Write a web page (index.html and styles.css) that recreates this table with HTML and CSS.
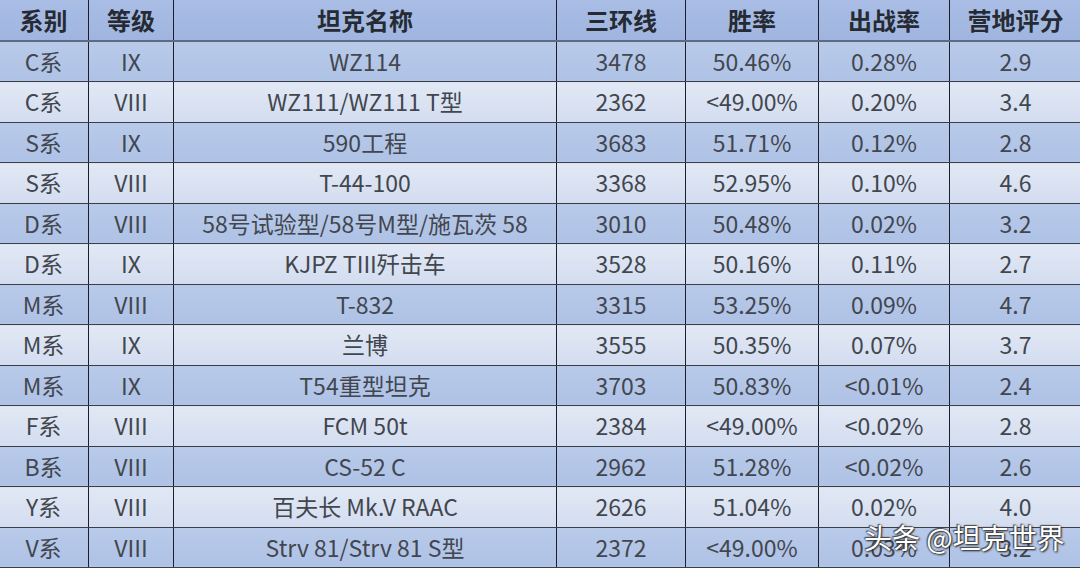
FILE: index.html
```html
<!DOCTYPE html>
<html lang="zh">
<head>
<meta charset="utf-8">
<link rel="stylesheet" href="styles.css">
</head>
<body>
<div class="wrap">
<table class="grid">
<colgroup>
<col class="c1"><col class="c2"><col class="c3"><col class="c4"><col class="c5"><col class="c6"><col class="c7">
</colgroup>
<thead>
<tr class="head"><th>系别</th><th>等级</th><th>坦克名称</th><th>三环线</th><th>胜率</th><th>出战率</th><th>营地评分</th></tr>
</thead>
<tbody>
<tr class="dark"><td>C系</td><td>IX</td><td>WZ114</td><td>3478</td><td>50.46%</td><td>0.28%</td><td>2.9</td></tr>
<tr class="light"><td>C系</td><td>VIII</td><td>WZ111/WZ111 T型</td><td>2362</td><td>&lt;49.00%</td><td>0.20%</td><td>3.4</td></tr>
<tr class="dark"><td>S系</td><td>IX</td><td>590工程</td><td>3683</td><td>51.71%</td><td>0.12%</td><td>2.8</td></tr>
<tr class="light"><td>S系</td><td>VIII</td><td>T-44-100</td><td>3368</td><td>52.95%</td><td>0.10%</td><td>4.6</td></tr>
<tr class="dark"><td>D系</td><td>VIII</td><td>58号试验型/58号M型/施瓦茨 58</td><td>3010</td><td>50.48%</td><td>0.02%</td><td>3.2</td></tr>
<tr class="light"><td>D系</td><td>IX</td><td>KJPZ TIII歼击车</td><td>3528</td><td>50.16%</td><td>0.11%</td><td>2.7</td></tr>
<tr class="dark"><td>M系</td><td>VIII</td><td>T-832</td><td>3315</td><td>53.25%</td><td>0.09%</td><td>4.7</td></tr>
<tr class="light"><td>M系</td><td>IX</td><td>兰博</td><td>3555</td><td>50.35%</td><td>0.07%</td><td>3.7</td></tr>
<tr class="dark"><td>M系</td><td>IX</td><td>T54重型坦克</td><td>3703</td><td>50.83%</td><td>&lt;0.01%</td><td>2.4</td></tr>
<tr class="light"><td>F系</td><td>VIII</td><td>FCM 50t</td><td>2384</td><td>&lt;49.00%</td><td>&lt;0.02%</td><td>2.8</td></tr>
<tr class="dark"><td>B系</td><td>VIII</td><td>CS-52 C</td><td>2962</td><td>51.28%</td><td>&lt;0.02%</td><td>2.6</td></tr>
<tr class="light"><td>Y系</td><td>VIII</td><td>百夫长 Mk.V RAAC</td><td>2626</td><td>51.04%</td><td>0.02%</td><td>4.0</td></tr>
<tr class="dark"><td>V系</td><td>VIII</td><td>Strv 81/Strv 81 S型</td><td>2372</td><td>&lt;49.00%</td><td>0.03%</td><td>3.2</td></tr>
</tbody>
</table>
<div class="mark">头条 @坦克世界</div>
</div>
</body>
</html>
```
FILE: styles.css
```css
* { box-sizing: border-box; }
html, body { margin: 0; padding: 0; }
body {
  width: 1080px;
  height: 568px;
  overflow: hidden;
  background: #dbe3f2;
  font-family: "Noto Sans CJK SC", "Noto Sans", sans-serif;
}
.wrap { position: relative; width: 1080px; height: 568px; }
.grid {
  width: 1083px;
  border-collapse: collapse;
  table-layout: fixed;
  margin-left: -2px;
}
.c1 { width: 90px; }
.c2 { width: 85px; }
.c3 { width: 383px; }
.c4 { width: 129px; }
.c5 { width: 133px; }
.c6 { width: 131px; }
.c7 { width: 132px; }
th, td {
  text-align: center;
  vertical-align: middle;
  padding: 0;
  border-left: 1.5px solid #1c1f28;
  border-right: 1.5px solid #1c1f28;
  white-space: nowrap;
  line-height: 1;
}
th {
  height: 41px;
  font-size: 24px;
  font-weight: 700;
  color: #252a33;
  background: linear-gradient(#a9bde5, #9fb5df);
  border-bottom: 2px solid #5d6b86;
}
td {
  height: 40.5px;
  font-size: 23px;
  font-weight: 400;
  color: #42464e;
  border-bottom: 1.5px solid #3a3e47;
}
tr.dark td { background: linear-gradient(#b9cae9, #aec2e6); }
tr.light td { background: linear-gradient(#e2e8f4, #d3ddf0); }
.mark {
  position: absolute;
  left: 864px;
  top: 521px;
  font-size: 28px;
  line-height: 1.2;
  color: #ffffff;
  text-shadow: 0 0 2px #333, 1px 1px 2px #222, -1px -1px 1px #555;
}
```
